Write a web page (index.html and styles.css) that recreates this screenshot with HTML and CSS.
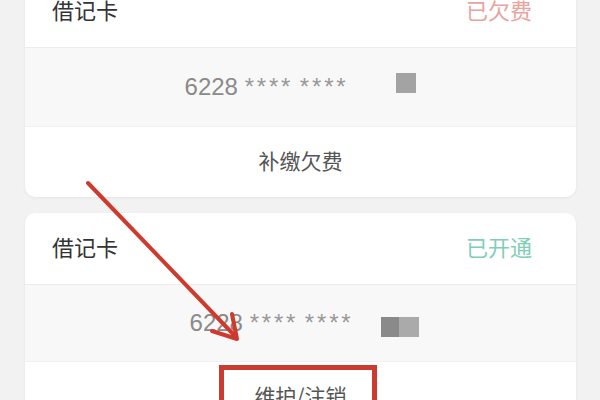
FILE: index.html
```html
<!DOCTYPE html>
<html lang="zh-CN">
<head>
<meta charset="utf-8">
<title>借记卡</title>
<link rel="stylesheet" href="styles.css">
</head>
<body>
<div class="page">
  <div class="card card-first">
    <div class="head">
      <span class="title">借记卡</span>
      <span class="status owed">已欠费</span>
    </div>
    <div class="numrow gap-wide">
      <span class="num"><span class="dig">6228</span> <span class="ast">****</span> <span class="ast">****</span></span>
      <span class="sq sq-mid"></span>
    </div>
    <div class="action">补缴欠费</div>
  </div>

  <div class="card">
    <div class="head">
      <span class="title">借记卡</span>
      <span class="status open">已开通</span>
    </div>
    <div class="numrow gap-narrow">
      <span class="num"><span class="dig">6228</span> <span class="ast">****</span> <span class="ast">****</span></span>
      <span class="sqs"><span class="sq sq-dark"></span><span class="sq sq-light"></span></span>
    </div>
    <div class="action">
      维护/注销
      <span class="mark"></span>
    </div>
  </div>

  <svg class="arrow" width="600" height="400" viewBox="0 0 600 400">
    <line x1="88" y1="183" x2="234" y2="335" stroke="#cf3a2f" stroke-width="4" stroke-linecap="round"/>
    <polyline points="212,331 237,339 232,314" fill="none" stroke="#cf3a2f" stroke-width="4" stroke-linecap="round" stroke-linejoin="round"/>
  </svg>
</div>
</body>
</html>
```
FILE: styles.css
```css
* { box-sizing: border-box; }
html, body {
  margin: 0;
  padding: 0;
  background: #f2f2f2;
  width: 600px;
  height: 400px;
  overflow: hidden;
}
.page {
  position: relative;
  width: 600px;
  height: 400px;
  padding: 0 24px 0 25px;
  display: flex;
  flex-direction: column;
  gap: 16px;
  font-family: "Noto Sans CJK SC", "Liberation Sans", sans-serif;
}
.card {
  background: #ffffff;
  border-radius: 10px;
  box-shadow: 0 1px 3px rgba(0, 0, 0, 0.06);
  flex: none;
}
.card-first { margin-top: -24px; }
.head {
  height: 71px;
  display: flex;
  align-items: center;
  justify-content: space-between;
  padding: 0 44px 6px 27px;
  font-size: 22px;
}
.title { color: #333333; }
.status.owed { color: #e8a49e; }
.status.open { color: #7fcfb7; }
.numrow {
  height: 80px;
  background: #f8f8f8;
  border-top: 1px solid #ededed;
  border-bottom: 1px solid #f1f1f1;
  display: flex;
  align-items: center;
  justify-content: center;
}
.card + .card .numrow { height: 78px; }
.gap-wide { gap: 48px; }
.gap-narrow { gap: 28px; padding-left: 8px; }
.num {
  font-family: "Liberation Sans", Arial, sans-serif;
  font-size: 24px;
  color: #8a8a8a;
  line-height: 1;
}
.ast {
  color: #999999;
  letter-spacing: 2.8px;
}
.sq {
  display: inline-block;
  width: 20px;
  height: 20px;
}
.sq-mid { background: #a3a3a3; margin-top: -8px; }
.sqs { display: flex; margin-top: 8px; }
.sq-dark { background: #8a8a8a; width: 18px; }
.sq-light { background: #aaaaaa; }
.action {
  position: relative;
  height: 70px;
  display: flex;
  align-items: center;
  justify-content: center;
  padding-bottom: 4px;
  font-size: 21px;
  color: #555555;
}
.mark {
  position: absolute;
  left: 194px;
  top: 3px;
  width: 158px;
  height: 62px;
  border: 5px solid #cc3b30;
}
.arrow {
  position: absolute;
  left: 0;
  top: 0;
  pointer-events: none;
}
```
